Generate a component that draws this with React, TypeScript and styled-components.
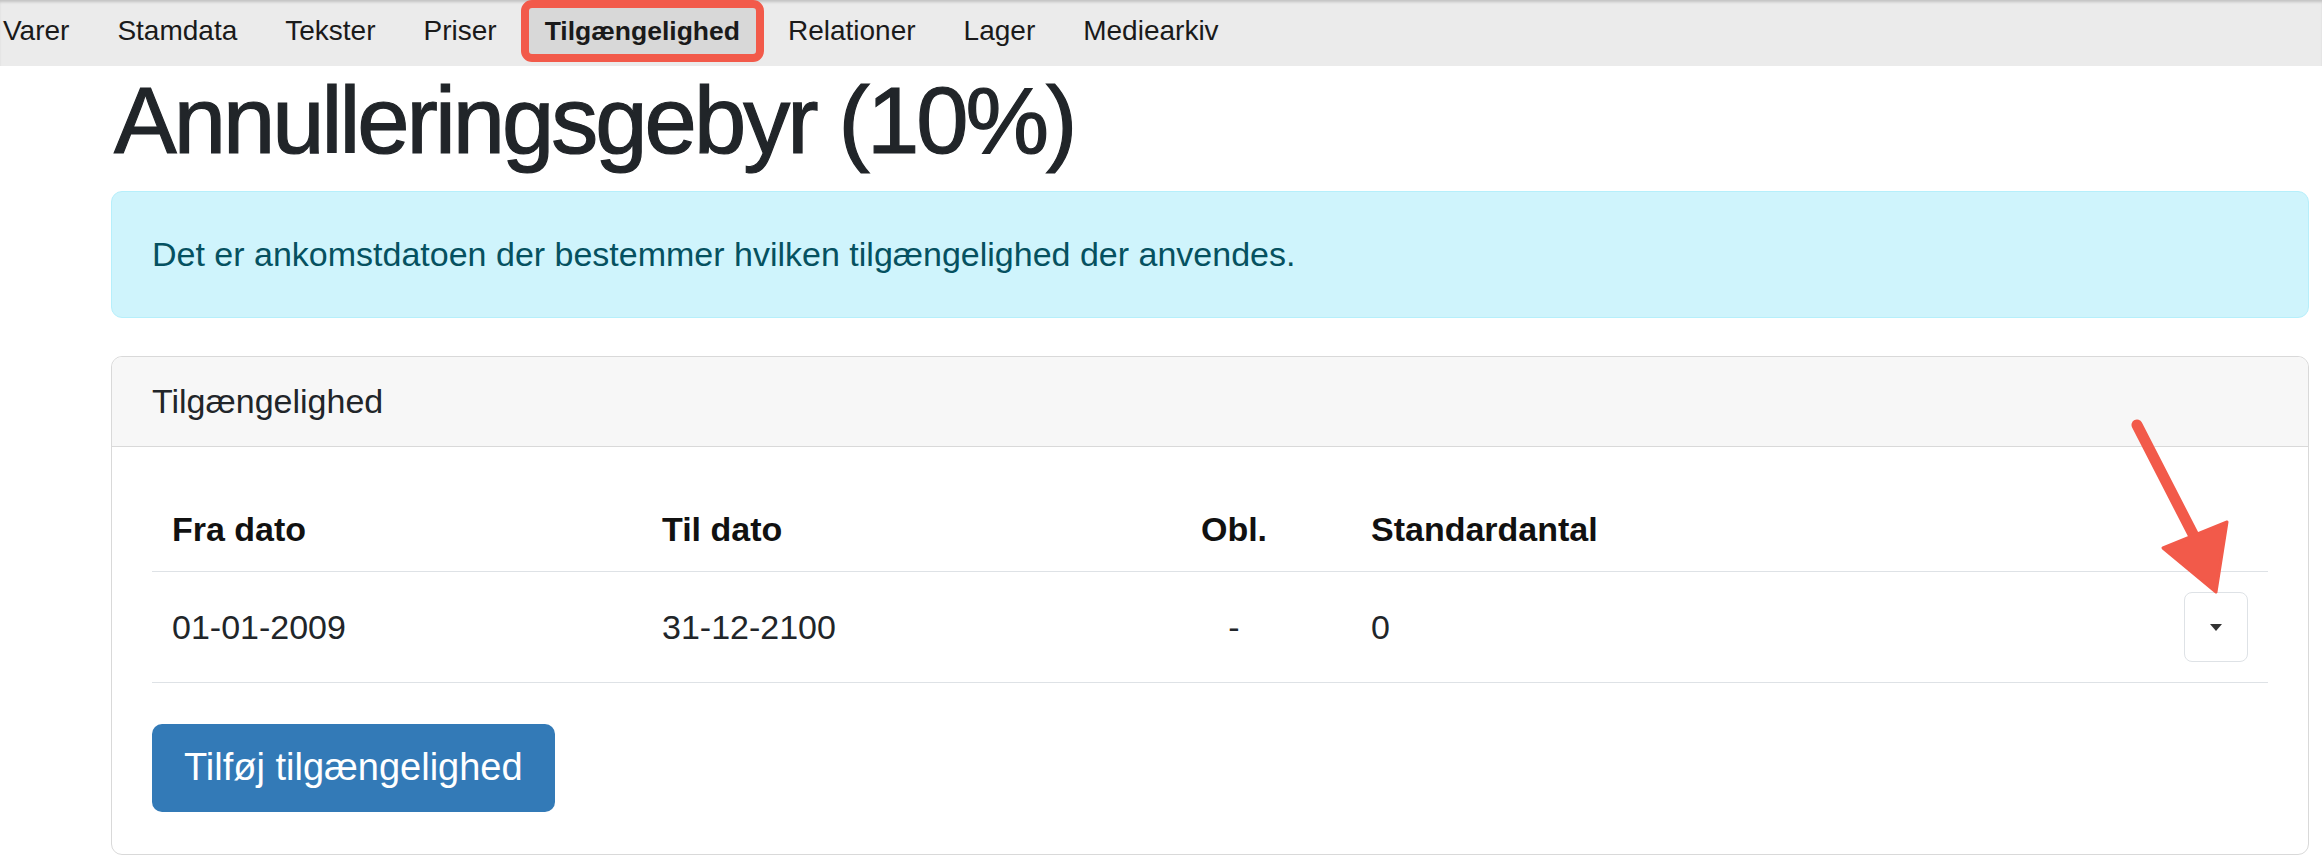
import React from 'react';
import styled, { createGlobalStyle } from 'styled-components';

const GlobalStyle = createGlobalStyle`
  html, body {
    margin: 0;
    padding: 0;
    background: #fff;
  }
  body {
    font-family: "Liberation Sans", Arial, sans-serif;
    color: #212529;
  }
`;

const NavBar = styled.nav`
  height: 66px;
  background: #ebebeb;
  box-shadow: inset 0 3px 3px -1px rgba(0, 0, 0, 0.18);
  overflow: hidden;
`;

const NavList = styled.ul`
  list-style: none;
  margin: 0 0 0 -21px;
  padding: 0;
  display: flex;
  align-items: flex-start;
`;

const NavItem = styled.li<{ $active?: boolean }>`
  height: 46px;
  line-height: 46px;
  padding: 0 16px;
  border: 8px solid ${(p) => (p.$active ? '#f25a4a' : 'transparent')};
  border-radius: 11px;
  background: ${(p) => (p.$active ? '#d8d8d8' : 'transparent')};
  font-family: "Liberation Sans", Arial, sans-serif;
  font-size: ${(p) => (p.$active ? '26.5px' : '28px')};
  font-weight: ${(p) => (p.$active ? 700 : 400)};
  color: #1a1a1a;
  white-space: nowrap;
`;

const Main = styled.main`
  margin: 0 13px 0 111px;
`;

const Title = styled.h1`
  margin: 3px 0 19px 3px;
  font-size: 94px;
  line-height: 1.1;
  font-weight: 500;
  letter-spacing: -3px;
  color: #212529;
  -webkit-text-stroke: 1.2px #212529;
`;

const Alert = styled.div`
  padding: 37px 40px;
  background: #cff4fc;
  border: 1px solid #b6effb;
  border-radius: 11px;
  color: #055160;
  font-size: 34px;
  line-height: 51px;
`;

const Card = styled.section`
  position: relative;
  margin-top: 38px;
  border: 1px solid #d9d9d9;
  border-radius: 11px;
  background: #fff;
`;

const CardHeader = styled.div`
  padding: 19px 40px;
  background: #f7f7f7;
  border-bottom: 1px solid #d9d9d9;
  border-radius: 11px 11px 0 0;
  font-size: 34px;
  line-height: 51px;
  color: #212529;
`;

const CardBody = styled.div`
  padding: 40px 40px 42px;
`;

const Table = styled.table`
  width: 100%;
  border-collapse: collapse;
  table-layout: fixed;
`;

const Th = styled.th<{ $align?: string }>`
  padding: 17px 20px 16px;
  text-align: ${(p) => p.$align || 'left'};
  font-size: 34px;
  line-height: 51px;
  font-weight: 700;
  color: #111;
  border-bottom: 1px solid #dee2e6;
`;

const Td = styled.td<{ $align?: string }>`
  padding: 20px;
  text-align: ${(p) => p.$align || 'left'};
  vertical-align: middle;
  font-size: 34px;
  line-height: 51px;
  color: #212529;
  border-bottom: 1px solid #dee2e6;
`;

const DropButton = styled.button`
  display: flex;
  align-items: center;
  justify-content: center;
  margin-left: auto;
  width: 64px;
  height: 70px;
  padding: 0;
  background: #fff;
  border: 1px solid #dee2e6;
  border-radius: 8px;
`;

const Caret = styled.span`
  width: 0;
  height: 0;
  border-top: 7px solid #333;
  border-left: 6px solid transparent;
  border-right: 6px solid transparent;
`;

const AddButton = styled.button`
  display: block;
  margin-top: 41px;
  padding: 15px 32px 16px;
  background: #337ab7;
  color: #fff;
  border: none;
  border-radius: 10px;
  font-family: "Liberation Sans", Arial, sans-serif;
  font-size: 38px;
  line-height: 57px;
`;

const Arrow = styled.svg`
  position: absolute;
  left: 1989px;
  top: 53px;
`;

const navItems = ['Varer', 'Stamdata', 'Tekster', 'Priser', 'Tilgængelighed', 'Relationer', 'Lager', 'Mediearkiv'];

export default function App() {
  return (
    <>
      <GlobalStyle />
      <NavBar>
        <NavList>
          {navItems.map((n) => (
            <NavItem key={n} $active={n === 'Tilgængelighed'}>
              {n}
            </NavItem>
          ))}
        </NavList>
      </NavBar>
      <Main>
        <Title>Annulleringsgebyr (10%)</Title>
        <Alert>Det er ankomstdatoen der bestemmer hvilken tilgængelighed der anvendes.</Alert>
        <Card>
          <CardHeader>Tilgængelighed</CardHeader>
          <CardBody>
            <Table>
              <colgroup>
                <col style={{ width: 490 }} />
                <col style={{ width: 475 }} />
                <col style={{ width: 234 }} />
                <col />
                <col style={{ width: 104 }} />
              </colgroup>
              <thead>
                <tr>
                  <Th>Fra dato</Th>
                  <Th>Til dato</Th>
                  <Th $align="center">Obl.</Th>
                  <Th>Standardantal</Th>
                  <Th />
                </tr>
              </thead>
              <tbody>
                <tr>
                  <Td>01-01-2009</Td>
                  <Td>31-12-2100</Td>
                  <Td $align="center">-</Td>
                  <Td>0</Td>
                  <Td $align="right">
                    <DropButton>
                      <Caret />
                    </DropButton>
                  </Td>
                </tr>
              </tbody>
            </Table>
            <AddButton>Tilføj tilgængelighed</AddButton>
          </CardBody>
          <Arrow width="140" height="190" viewBox="0 0 140 190">
            <line x1="36" y1="15" x2="94" y2="128" stroke="#f25a4a" strokeWidth="11" strokeLinecap="round" />
            <polygon points="115,182 126,112 62,138" fill="#f25a4a" strokeLinejoin="round" stroke="#f25a4a" strokeWidth="3" />
          </Arrow>
        </Card>
      </Main>
    </>
  );
}
